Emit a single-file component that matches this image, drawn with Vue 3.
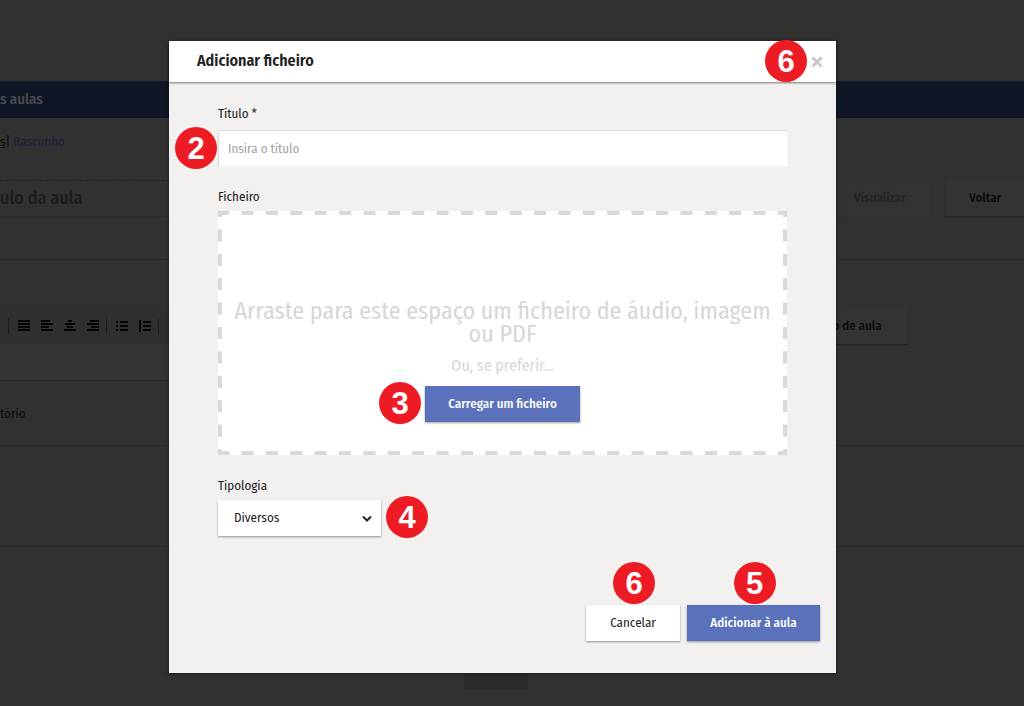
<script setup>
import { ref } from 'vue'

const title = ref('')
const kind = ref('Diversos')

const alignIcons = [
  { name: 'Justificar', d: 'M0 1h12M0 4h12M0 7h12M0 10h12' },
  { name: 'Alinhar à esquerda', d: 'M0 1h9M0 4h12M0 7h8M0 10h12' },
  { name: 'Centrar', d: 'M4 1h4M1 4h10M3 7h6M0 10h12' },
  { name: 'Alinhar à direita', d: 'M3 1h9M0 4h12M4 7h8M0 10h12' },
]
const listIcons = [
  { name: 'Lista', d: 'M0 2h2M4 2h8M0 6h2M4 6h8M0 10h2M4 10h8' },
  { name: 'Lista numerada', d: 'M1 0v12M4 2h8M4 6h8M4 10h8' },
]
</script>

<template>
  <div class="page">
    <div class="lesson">
      <div class="topbar">s aulas</div>
      <div class="status"><a href="#" class="crumb">s</a><span>|</span>&nbsp;<a href="#" class="draft">Rascunho</a></div>
      <div class="heading">
        <div class="lesson-title">ulo da aula</div>
        <button class="bg-btn faded" type="button">Visualizar</button>
        <button class="bg-btn back" type="button">Voltar</button>
      </div>
      <div class="editor-row">
        <div class="editor">
          <div class="toolbar">
            <div class="tools">
              <button v-for="i in alignIcons" :key="i.name" type="button" :aria-label="i.name">
                <svg width="12" height="12" viewBox="0 0 12 12"><path :d="i.d" /></svg>
              </button>
            </div>
            <div class="tools">
              <button v-for="i in listIcons" :key="i.name" type="button" :aria-label="i.name">
                <svg width="12" height="12" viewBox="0 0 12 12"><path :d="i.d" /></svg>
              </button>
            </div>
            <div class="tools"></div>
          </div>
        </div>
        <button class="bg-btn plan" type="button">o de aula</button>
      </div>
      <div class="section">tório</div>
      <div class="section tall"></div>
      <div class="foot"></div>
    </div>

    <div class="overlay">
      <form class="modal" role="dialog" aria-labelledby="dlg-title" @submit.prevent>
        <header class="modal-head">
          <h1 id="dlg-title">Adicionar ficheiro</h1>
          <div class="anchor">
            <button class="close" type="button" aria-label="Fechar">
              <svg width="12" height="12" viewBox="0 0 12 12"><path d="M1.500 1.500l9 9M10.500 1.500l-9 9" /></svg>
            </button>
            <span class="badge at-close">6</span>
          </div>
        </header>

        <div class="modal-body">
          <label for="titulo">Título *</label>
          <div class="anchor title-wrap">
            <input id="titulo" v-model="title" type="text" placeholder="Insira o título" />
            <span class="badge at-left">2</span>
          </div>

          <div class="label file-label">Ficheiro</div>
          <div class="drop">
            <svg class="dashes" aria-hidden="true">
              <line class="h" x1="0" y1="0" x2="100%" y2="0" pathLength="560" />
              <line class="h" x1="0" y1="100%" x2="100%" y2="100%" pathLength="560" />
              <line class="v" x1="0" y1="0" x2="0" y2="100%" pathLength="240" />
              <line class="v" x1="100%" y1="0" x2="100%" y2="100%" pathLength="240" />
            </svg>
            <p class="big">Arraste para este espaço um ficheiro de áudio, imagem ou PDF</p>
            <p class="or">Ou, se preferir...</p>
            <div class="anchor">
              <button class="btn primary upload" type="button">Carregar um ficheiro</button>
              <span class="badge at-upload">3</span>
            </div>
          </div>

          <label for="tipo" class="type-label">Tipologia</label>
          <div class="anchor select-wrap">
            <select id="tipo" v-model="kind">
              <option>Diversos</option>
            </select>
            <svg class="chevron" width="10" height="8" viewBox="0 0 10 8"><path d="M1 1.500l4 4 4-4" /></svg>
            <span class="badge at-right">4</span>
          </div>
        </div>

        <footer class="actions">
          <div class="anchor">
            <button class="btn cancel" type="button">Cancelar</button>
            <span class="badge at-top">6</span>
          </div>
          <div class="anchor">
            <button class="btn primary" type="submit">Adicionar à aula</button>
            <span class="badge at-top">5</span>
          </div>
        </footer>
      </form>
    </div>
  </div>
</template>

<style>
body {
  background: #31312f;
}
</style>

<style scoped>
* {
  box-sizing: border-box;
}
.page {
  position: relative;
  min-height: 100vh;
  overflow: hidden;
  font-family: "Fira Sans Condensed", "Fira Sans", "Noto Sans", sans-serif;
  font-size: 13px;
  line-height: 16px;
  color: #222;
}
button,
input,
select {
  font: inherit;
  color: inherit;
  border: 0;
  margin: 0;
  border-radius: 0;
}

/* dimmed lesson editor */
.lesson {
  position: absolute;
  inset: 0;
  padding-top: 81px;
  background: #31312f;
  color: #0b0b0b;
}
.topbar {
  height: 37px;
  background: #111626;
  color: #4a4b50;
  font-size: 15px;
  font-weight: 500;
  line-height: 37px;
}
.status {
  height: 62px;
  padding-top: 16px;
}
.crumb {
  color: #0b0b0b;
}
.draft {
  color: #1b2038;
  text-decoration: none;
}
.heading {
  display: flex;
  height: 80px;
  border-bottom: 1px solid #2a2a28;
}
.lesson-title {
  flex: 1;
  height: 37px;
  border-top: 1px dashed #262625;
  border-bottom: 1px solid #2d2d2b;
  color: #1c1c1b;
  font-size: 18px;
  font-weight: 500;
  line-height: 35px;
}
.bg-btn {
  height: 36px;
  padding: 0 24px;
  background: #333332;
  font-weight: 500;
  box-shadow: 0 1px 1px #222;
}
.faded {
  width: 100px;
  color: #232322;
  background: #323230;
  box-shadow: 0 0 1px #2a2a29;
}
.back {
  width: 94px;
  margin-left: 15px;
  margin-right: -15px;
  text-align: left;
}
.editor-row {
  display: grid;
  grid-template-columns: 800px auto;
  justify-content: start;
  align-items: start;
  padding-top: 48px;
}
.editor {
  height: 73px;
  background: #333333;
  border-bottom: 1px solid #292928;
}
.toolbar {
  display: flex;
  align-items: center;
  height: 36px;
  padding-left: 8px;
  background: #2f2f2e;
}
.tools {
  display: flex;
  gap: 10px;
  padding: 0 6px 0 9px;
  border-left: 1px solid #1c1c1c;
  height: 16px;
  align-items: center;
}
.tools button {
  width: 13px;
  height: 12px;
  padding: 0;
  background: none;
}
.tools svg {
  display: block;
}
.tools path {
  stroke: #050505;
  stroke-width: 2;
  fill: none;
}
.plan {
  width: 108px;
  padding-left: 30px;
}
.section {
  height: 65px;
  border-bottom: 1px solid #292928;
  line-height: 65px;
}
.tall {
  height: 101px;
}
.foot {
  width: 64px;
  height: 143px;
  margin-left: 464px;
  background: #2b2b2a;
}

/* dialog */
.overlay {
  position: relative;
  padding: 41px 188px 33px 169px;
}
.modal {
  display: flex;
  flex-direction: column;
  background: #f2f1ef;
  box-shadow: 0 1px 4px rgba(0, 0, 0, 0.5);
}
.modal-head {
  display: flex;
  align-items: center;
  justify-content: space-between;
  height: 41px;
  padding: 0 12px 0 28px;
  background: #fff;
  box-shadow: 0 1px 2px rgba(0, 0, 0, 0.5);
}
h1 {
  margin: 0;
  padding-bottom: 2px;
  font-size: 16px;
  line-height: 20px;
  font-weight: 600;
}
.anchor {
  position: relative;
}
.close {
  display: block;
  width: 14px;
  height: 12px;
  padding: 0 1px;
  background: none;
}
.close svg {
  display: block;
}
.close path {
  stroke: #c9c9c9;
  stroke-width: 3;
}
.modal-body {
  display: flex;
  flex-direction: column;
  padding: 24px 49px 0;
}
label,
.label {
  display: block;
}
.title-wrap {
  margin-top: 8px;
}
input {
  display: block;
  width: 100%;
  height: 36px;
  padding: 0 9px;
  background: #fff;
  border-top: 1px solid #dcdcdc;
  border-left: 1px solid #dcdcdc;
  outline: 0;
}
input::placeholder {
  color: #a2a2a2;
  opacity: 1;
}
.file-label {
  margin-top: 23px;
}
.drop {
  position: relative;
  display: flex;
  flex-direction: column;
  align-items: center;
  margin-top: 6px;
  padding: 89px 10px 33px;
  background: #fff;
  text-align: center;
  color: #d8d6d4;
}
.dashes {
  position: absolute;
  inset: 0;
  width: 100%;
  height: 100%;
}
.dashes line {
  stroke: #d9d9d9;
  stroke-width: 8;
  stroke-dasharray: 12 12;
}
.dashes .h {
  stroke-dashoffset: 1;
}
.dashes .v {
  stroke-dashoffset: 6;
}
.big {
  margin: 0;
  font-size: 24px;
  line-height: 23px;
}
.or {
  margin: 10px 0;
  font-size: 16px;
  line-height: 20px;
}
.btn {
  display: block;
  height: 36px;
  padding: 0 24px;
  background: #fff;
  box-shadow: 0 1px 2px rgba(0, 0, 0, 0.4);
}
.primary {
  background: #5a72bb;
  color: #fff;
  font-weight: 500;
}
.upload {
  width: 155px;
  padding: 0;
}
.type-label {
  margin-top: 23px;
}
.select-wrap {
  width: 163px;
  margin-top: 6px;
}
select {
  display: block;
  width: 100%;
  height: 36px;
  padding: 0 16px;
  appearance: none;
  background: #fff;
  box-shadow: 0 1px 2px rgba(0, 0, 0, 0.4);
}
.chevron {
  position: absolute;
  right: 9px;
  top: 15px;
  pointer-events: none;
}
.chevron path {
  fill: none;
  stroke: #222;
  stroke-width: 2;
}
.actions {
  display: flex;
  justify-content: flex-end;
  gap: 7px;
  padding: 69px 16px 32px;
}
.cancel {
  width: 94px;
}
.actions .primary {
  width: 133px;
  padding: 0;
}

/* numbered callouts */
.badge {
  position: absolute;
  width: 42px;
  height: 42px;
  border-radius: 50%;
  background: #ed1c24;
  color: #fff;
  font: bold 31px/44px "Liberation Sans", Arial, sans-serif;
  text-align: center;
}
.at-close {
  right: 17px;
  top: -16px;
}
.at-left {
  right: 100%;
  top: -3px;
  margin-right: 1px;
}
.at-upload {
  right: 100%;
  top: -4px;
  margin-right: 4px;
}
.at-right {
  left: 100%;
  top: -4px;
  margin-left: 5px;
}
.at-top {
  left: 50%;
  bottom: 100%;
  margin-left: -20px;
  margin-bottom: 1px;
}
</style>
